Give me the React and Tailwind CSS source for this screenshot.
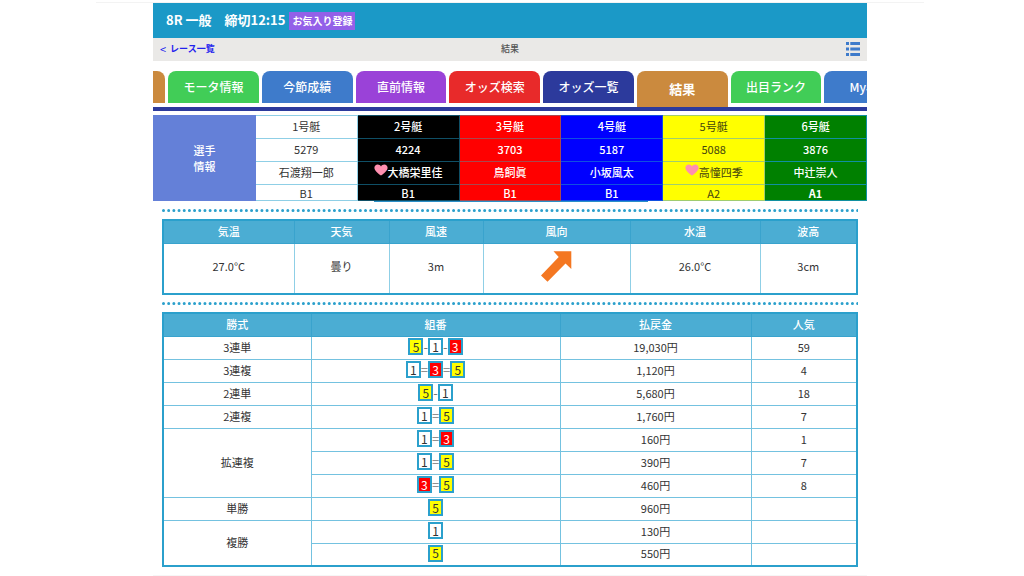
import React from "react";

const tabs = [
  { label: "", name: "レース情報", color: "bg-[#cb8a3e]" },
  { label: "モータ情報", color: "bg-[#41cd57]" },
  { label: "今節成績", color: "bg-[#3e7bcb]" },
  { label: "直前情報", color: "bg-[#9a42d8]" },
  { label: "オッズ検索", color: "bg-[#e82a2a]" },
  { label: "オッズ一覧", color: "bg-[#2c3a9c]" },
  { label: "結果", color: "bg-[#cb8a3e]", active: true },
  { label: "出目ランク", color: "bg-[#41cd57]" },
  { label: "My収支", color: "bg-[#3e7bcb]" },
];

const racers = [
  { boat: "1号艇", no: "5279", name: "石渡翔一郎", rank: "B1", style: "bg-white text-[#333] border-[#8fcfe6]" },
  { boat: "2号艇", no: "4224", name: "大橋栄里佳", rank: "B1", heart: true, style: "bg-black text-white font-medium border-[#0f4f66]" },
  { boat: "3号艇", no: "3703", name: "鳥飼眞", rank: "B1", style: "bg-[#ff0000] text-white font-medium border-[#a8484f]" },
  { boat: "4号艇", no: "5187", name: "小坂風太", rank: "B1", style: "bg-[#0000ff] text-white font-medium border-[#1050e0]" },
  { boat: "5号艇", no: "5088", name: "高憧四季", rank: "A2", heart: true, style: "bg-[#ffff00] text-[#44440f] border-[#a0cc70]" },
  { boat: "6号艇", no: "3876", name: "中辻崇人", rank: "A1", style: "bg-[#008000] text-white font-medium border-[#1090a0]" },
];

const results = [
  { type: "3連単", span: 1, combo: "5-1-3", pay: "19,030円", pop: "59" },
  { type: "3連複", span: 1, combo: "1=3=5", pay: "1,120円", pop: "4" },
  { type: "2連単", span: 1, combo: "5-1", pay: "5,680円", pop: "18" },
  { type: "2連複", span: 1, combo: "1=5", pay: "1,760円", pop: "7" },
  { type: "拡連複", span: 3, combo: "1=3", pay: "160円", pop: "1" },
  { combo: "1=5", pay: "390円", pop: "7" },
  { combo: "3=5", pay: "460円", pop: "8" },
  { type: "単勝", span: 1, combo: "5", pay: "960円", pop: "" },
  { type: "複勝", span: 2, combo: "1", pay: "130円", pop: "" },
  { combo: "5", pay: "550円", pop: "" },
];

const badgeStyles = {
  1: "bg-white text-[#333]",
  3: "bg-[#ff0000] text-white",
  5: "bg-[#ffff00] text-[#333]",
};

function Heart() {
  return (
    <svg viewBox="0 0 14 12" className="mb-1 h-3 w-3.5 shrink-0" aria-hidden="true">
      <path
        d="M7 11.6C3.6 9.2.4 6.6.4 3.8.4 1.8 1.9.5 3.7.5 5.1.5 6.3 1.2 7 2.4 7.7 1.2 8.9.5 10.3.5c1.8 0 3.3 1.3 3.3 3.3 0 2.8-3.2 5.400-6.600 7.800z"
        fill="#ff8fb0"
      />
    </svg>
  );
}

function DottedLine() {
  return (
    <svg className="block h-[3px] w-full" aria-hidden="true">
      <line x1="1.5" y1="1.5" x2="100%" y2="1.5" stroke="#2ba0cc" strokeWidth="3" strokeLinecap="round" strokeDasharray="0 5.18" />
    </svg>
  );
}

function Combo({ value }) {
  return (
    <span className="flex items-center justify-center">
      {value.split("").map((c, i) =>
        badgeStyles[c] ? (
          <span
            key={i}
            className={`flex h-[17px] w-[15px] items-center justify-center border-2 border-[#2ba0cc] text-[12px] leading-3 ${badgeStyles[c]}`}
          >
            {c}
          </span>
        ) : (
          <span key={i} className="text-[13px] leading-4 text-[#777]">
            {c}
          </span>
        )
      )}
    </span>
  );
}

function RacerTable() {
  return (
    <table className="w-full table-fixed border-collapse text-center">
      <tbody>
        <tr className="h-[23px]">
          <th rowSpan={4} scope="rowgroup" className="border border-[#6480d8] bg-[#6480d8] p-0 text-[11px] leading-4 font-medium text-white">
            選手
            <br />
            情報
          </th>
          {racers.map((r) => (
            <td key={r.boat} className={`border p-0 pb-0.5 ${r.style}`}>{r.boat}</td>
          ))}
        </tr>
        <tr className="h-[23px]">
          {racers.map((r) => (
            <td key={r.boat} className={`border p-0 pb-0.5 ${r.style}`}>{r.no}</td>
          ))}
        </tr>
        <tr className="h-[23px]">
          {racers.map((r) => (
            <td key={r.boat} className={`border p-0 pb-0.5 ${r.style}`}>
              <span className="flex h-4 items-center justify-center">
                {r.heart && <Heart />}
                {r.name}
              </span>
            </td>
          ))}
        </tr>
        <tr className="h-4">
          {racers.map((r) => (
            <td key={r.boat} className={`border p-0 leading-[14px] ${r.style}`}>
              {r.rank === "A1" ? <b>{r.rank}</b> : r.rank}
            </td>
          ))}
        </tr>
      </tbody>
    </table>
  );
}

function WeatherTable() {
  const cell = "border border-[#8fcfe6] p-0 pb-1";
  return (
    <table className="w-full table-fixed border-collapse border-2 border-[#2ba0cc] text-center">
      <colgroup>
        <col className="w-[131px]" />
        <col className="w-[95px]" />
        <col className="w-[94px]" />
        <col />
        <col className="w-[130px]" />
        <col className="w-[97px]" />
      </colgroup>
      <thead>
        <tr className="h-[23px] bg-[#4badd3] text-white">
          {["気温", "天気", "風速", "風向", "水温", "波高"].map((h) => (
            <th key={h} scope="col" className="border border-[#39a3cd] p-0 pb-0.5 font-medium">{h}</th>
          ))}
        </tr>
      </thead>
      <tbody>
        <tr className="h-[51px]">
          <td className={cell}>27.0°C</td>
          <td className={cell}>曇り</td>
          <td className={cell}>3m</td>
          <td className={cell}>
            <svg viewBox="0 0 31 31" className="mx-auto h-[31px] w-[31px]" role="img" aria-label="風向">
              <polygon points="0,24.5 17.7,6 12.5,.3 30.3,.3 30.3,18 24.5,12.5 6.5,30.8" fill="#f47721" />
            </svg>
          </td>
          <td className={cell}>26.0°C</td>
          <td className={cell}>3cm</td>
        </tr>
      </tbody>
    </table>
  );
}

function PayoutTable() {
  const cell = "border border-[#74c2e0] p-0 pb-0.5";
  return (
    <table className="w-full table-fixed border-collapse border-2 border-[#2ba0cc] text-center">
      <colgroup>
        <col className="w-[148px]" />
        <col />
        <col className="w-[191px]" />
        <col className="w-[106px]" />
      </colgroup>
      <thead>
        <tr className="h-[23px] bg-[#4badd3] text-white">
          {["勝式", "組番", "払戻金", "人気"].map((h) => (
            <th key={h} scope="col" className="border border-[#39a3cd] p-0 pb-0.5 font-medium">{h}</th>
          ))}
        </tr>
      </thead>
      <tbody>
        {results.map((r, i) => (
          <tr key={i} className="h-[23px]">
            {r.type && (
              <th rowSpan={r.span} scope="rowgroup" className={`${cell} font-normal`}>{r.type}</th>
            )}
            <td className={cell}><Combo value={r.combo} /></td>
            <td className={cell}>{r.pay}</td>
            <td className={cell}>{r.pop}</td>
          </tr>
        ))}
      </tbody>
    </table>
  );
}

export default function App() {
  return (
    <div className="bg-white pr-1 font-['Noto_Sans_CJK_JP',sans-serif] text-[11px] leading-4 text-[#333]">
      <div className="mx-auto h-[3px] max-w-[828px] border-b border-[#f3f3f3]" />
      <div className="mx-auto max-w-[714px]">
        <header className="flex h-[35px] items-center gap-1 bg-[#1b99c7] px-[13px] text-white">
          <h1 className="pb-0.5 text-[13px] leading-5 font-bold">8R 一般　締切12:15</h1>
          <button type="button" className="h-[18px] bg-[#9360e8] px-[3px] text-[10px] leading-4 font-bold">
            お気入り登録
          </button>
        </header>

        <div className="grid h-[23px] grid-cols-3 items-center bg-[#eae9e7] px-[7px] pb-0.5 text-[9px] leading-3">
          <a href="#races" className="flex gap-1 text-[#2222ee]">
            <span className="text-[11px]">&lt;</span>
            <b>レース一覧</b>
          </a>
          <span className="text-center font-medium text-[#555]">結果</span>
          <button type="button" aria-label="メニュー" className="justify-self-end">
            <svg viewBox="0 0 14 14" className="h-3.5 w-3.5" fill="#3e7bcb" aria-hidden="true">
              <path d="M0 0h3v3H0zM4.3 0H14v3H4.300zM0 5.500h3v3H0zM4.300 5.500H14v3H4.300zM0 11h3v3H0zM4.300 11H14v3H4.300z" />
            </svg>
          </button>
        </div>

        <nav className="mt-2.5 overflow-hidden border-b-4 border-[#2c3a9c]">
          <ul className="-ml-[11%] flex h-9 items-start">
            {tabs.map((t, i) => (
              <li key={i} className="w-[11.83%] shrink-0 pr-[3px]">
                <a
                  href="#tab"
                  aria-label={t.name}
                  aria-current={t.active ? "page" : undefined}
                  className={`flex items-center justify-center rounded-t-lg text-white ${t.color} ${
                    t.active ? "h-9 text-[13px] font-bold" : "h-8 text-[12px] font-medium"
                  }`}
                >
                  {t.label}
                </a>
              </li>
            ))}
          </ul>
        </nav>

        <main className="pt-1">
          <RacerTable />
          <div className="mr-[219px] ml-[221px] h-px bg-[#2b90c8]" />
          <div className="mx-[9px] flex flex-col gap-[7px] pt-[7px]">
            <DottedLine />
            <WeatherTable />
            <DottedLine />
            <PayoutTable />
          </div>
        </main>
        <div className="mt-2 border-t border-[#f6f6f6]" />
      </div>
    </div>
  );
}
